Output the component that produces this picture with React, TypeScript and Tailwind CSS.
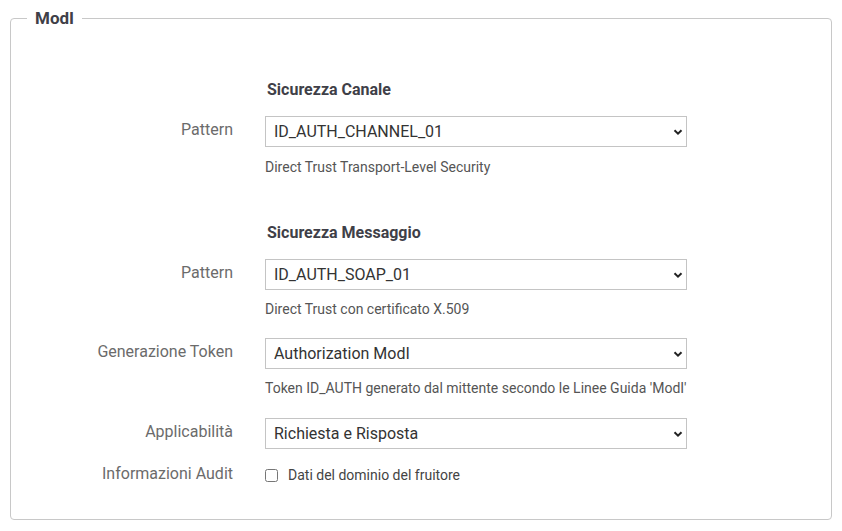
const font = { fontFamily: "Roboto, 'Liberation Sans', sans-serif" };

function Chevron() {
  return (
    <svg className="pointer-events-none absolute right-[4px] top-1/2 -translate-y-1/2" width="10" height="10" viewBox="0 0 10 10">
      <path d="M1.5 3.2 L5 6.6 L8.5 3.2" fill="none" stroke="#222" strokeWidth="2" />
    </svg>
  );
}

function Select({ value }: { value: string }) {
  return (
    <div className="relative w-[422px] h-[31px]">
      <select
        value={value}
        onChange={() => {}}
        className="appearance-none w-full h-full border border-[#c4c4c4] bg-white pl-[8px] pr-6 text-[16px] text-[#333] outline-none rounded-none"
      >
        <option>{value}</option>
      </select>
      <Chevron />
    </div>
  );
}

function Row({ label, children, className = "" }: { label: string; children: React.ReactNode; className?: string }) {
  return (
    <div className={`flex gap-[32px] ${className}`}>
      <div className="w-[206px] shrink-0 text-right text-[16px] leading-[24px] pt-[2px] text-[#6b6b6b]">{label}</div>
      <div>{children}</div>
    </div>
  );
}

function Help({ text, className = "" }: { text: string; className?: string }) {
  return <div className={`ml-[238px] text-[14px] leading-[20px] text-[#555] ${className}`}>{text}</div>;
}

function Heading({ text, className = "" }: { text: string; className?: string }) {
  return <div className={`ml-[240px] text-[16px] leading-[20px] font-bold text-[#3f3f48] ${className}`}>{text}</div>;
}

export default function App() {
  return (
    <div style={font} className="bg-white w-[842px] h-[531px] pt-[6px] px-[10px]">
      <fieldset className="border border-[#c8c8c8] rounded-[4px] px-[16px] pb-[33px]">
        <legend className="px-2 text-[17px] leading-[24px] font-bold text-[#3f3f48]">ModI</legend>

        <Heading text="Sicurezza Canale" className="mt-[50px]" />
        <Row label="Pattern" className="mt-[16px]">
          <Select value="ID_AUTH_CHANNEL_01" />
        </Row>
        <Help text="Direct Trust Transport-Level Security" className="mt-[10px]" />

        <Heading text="Sicurezza Messaggio" className="mt-[46px]" />
        <Row label="Pattern" className="mt-[16px]">
          <Select value="ID_AUTH_SOAP_01" />
        </Row>
        <Help text="Direct Trust con certificato X.509" className="mt-[9px]" />

        <Row label="Generazione Token" className="mt-[19px]">
          <Select value="Authorization ModI" />
        </Row>
        <Help text="Token ID_AUTH generato dal mittente secondo le Linee Guida 'ModI'" className="mt-[9px]" />

        <Row label="Applicabilità" className="mt-[20px]">
          <Select value="Richiesta e Risposta" />
        </Row>

        <Row label="Informazioni Audit" className="mt-[11px]">
          <label className="flex items-center h-[24px] pt-[6px] text-[14px] text-[#444]">
            <input type="checkbox" className="w-[13px] h-[13px] m-0 mr-[10px]" />
            Dati del dominio del fruitore
          </label>
        </Row>
      </fieldset>
    </div>
  );
}
